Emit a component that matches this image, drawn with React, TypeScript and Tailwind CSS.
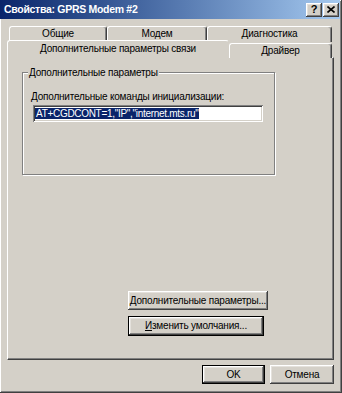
import React from "react";

const raised =
  "bg-[#d4d0c8] shadow-[inset_-1px_-1px_#404040,inset_1px_1px_#ffffff,inset_-2px_-2px_#808080,inset_2px_2px_#e4e1dc]";

const txt = "text-[10px] tracking-[-0.2px]";

const Btn = ({
  children,
  className = "",
  isDefault = false,
}: {
  children: React.ReactNode;
  className?: string;
  isDefault?: boolean;
}) => (
  <div className={`${isDefault ? "border border-black" : ""} ${className}`}>
    <div className={`${raised} flex h-full w-full items-center justify-center whitespace-nowrap ${txt} leading-none text-black`}>
      {children}
    </div>
  </div>
);

const Tab = ({
  label,
  className = "",
}: {
  label: string;
  className?: string;
}) => (
  <div
    className={`flex items-center justify-center whitespace-nowrap rounded-t-[3px] border-l border-t border-r border-l-white border-t-white border-r-[#404040] bg-[#d4d0c8] shadow-[inset_-1px_0_#808080] ${txt} leading-none text-black ${className}`}
  >
    {label}
  </div>
);

export default function App() {
  return (
    <div
      className="relative h-[393px] w-[342px] overflow-hidden bg-[#d4d0c8] shadow-[inset_-1px_-1px_#404040,inset_1px_1px_#ffffff,inset_-2px_-2px_#808080] text-black"
      style={{ fontFamily: '"Liberation Sans", Arial, sans-serif' }}
    >
      {/* title bar */}
      <div className="mr-[2px] flex h-[19px] items-center bg-gradient-to-r from-[#0a246a] to-[#a6caf0] pl-[4px] pr-[1px]">
        <span className="text-[10.5px] font-bold tracking-[-0.3px] leading-none text-white">Свойства: GPRS Modem #2</span>
        <div className="ml-auto flex gap-[1px]">
          <div className={`${raised} flex h-[14px] w-[16px] items-center justify-center text-[11px] font-bold leading-none`}>
            ?
          </div>
          <div className={`${raised} flex h-[14px] w-[16px] items-center justify-center`}>
            <svg width="8" height="7" viewBox="0 0 8 7">
              <path d="M0.5 0.5 L7.5 6.5 M7.5 0.5 L0.5 6.5" stroke="#000" strokeWidth="1.6" />
            </svg>
          </div>
        </div>
      </div>

      {/* tabs */}
      <div className="mt-[7px] pl-[7px]">
        <div className="flex h-[16px] pl-[2px]">
          <Tab label="Общие" className="w-[98px] pb-[2px]" />
          <Tab label="Модем" className="w-[100px] pb-[2px]" />
          <Tab label="Диагностика" className="w-[125px] pb-[2px]" />
        </div>
        <div className="relative z-10 -mt-[2px] flex h-[18px] items-end">
          <Tab label="Дополнительные параметры связи" className="h-[18px] w-[222px] border-r-[#d4d0c8] shadow-none pb-[2px]" />
          <Tab label="Драйвер" className="h-[15px] w-[103px]" />
        </div>

        {/* panel */}
        <div className="-mt-[1px] flex h-[303px] w-[327px] flex-col border-l border-t border-r border-b border-l-white border-t-white border-r-[#404040] border-b-[#404040] shadow-[inset_-1px_-1px_#808080]">
          {/* group box */}
          <div className="relative ml-[14px] mt-[14px] h-[103px] w-[253px] border border-[#808080] shadow-[inset_1px_1px_#ffffff,1px_1px_#ffffff]">
            <span className={`absolute -top-[7px] left-[5px] bg-[#d4d0c8] px-[1px] ${txt} leading-[13px]`}>
              Дополнительные параметры
            </span>
            <div className={`ml-[8px] mt-[17px] ${txt} leading-[13px]`}>
              <span className="underline">Д</span>ополнительные команды инициализации:
            </div>
            <div className="ml-[10px] mt-[2px] flex h-[17px] w-[230px] items-center bg-white pl-[2px] shadow-[inset_1px_1px_#808080,inset_-1px_-1px_#ffffff,inset_2px_2px_#404040,inset_-2px_-2px_#d4d0c8]">
              <span className="bg-[#0a246a] px-[1px] text-[10px] leading-[11px] tracking-[-0.3px] text-white">
                AT+CGDCONT=1,"IP","internet.mts.ru"
              </span>
            </div>
          </div>

          <div className="ml-[120px] mt-[116px] flex flex-col gap-[6px]">
            <Btn className="h-[19px] w-[140px]">
              <span>
                <span className="underline">Д</span>ополнительные параметры...
              </span>
            </Btn>
            <Btn className="h-[20px] w-[136px]" isDefault>
              <span>
                <span className="underline">И</span>зменить умолчания...
              </span>
            </Btn>
          </div>
        </div>
      </div>

      {/* bottom buttons */}
      <div className="mt-[5px] flex justify-end gap-[5px] pr-[8px]">
        <Btn className="h-[19px] w-[63px]" isDefault>OK</Btn>
        <Btn className="h-[19px] w-[64px]">Отмена</Btn>
      </div>
    </div>
  );
}
